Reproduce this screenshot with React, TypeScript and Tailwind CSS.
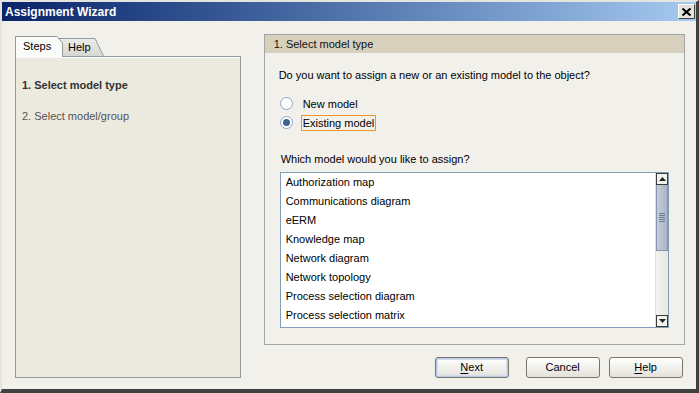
import { useState } from "react";

const models = [
  "Authorization map",
  "Communications diagram",
  "eERM",
  "Knowledge map",
  "Network diagram",
  "Network topology",
  "Process selection diagram",
  "Process selection matrix",
];

function Radio({ checked }: { checked: boolean }) {
  return (
    <span className="w-[13px] h-[13px] rounded-full border border-[#8ba6c6] bg-white flex items-center justify-center">
      {checked && <span className="w-[7px] h-[7px] rounded-full bg-[#3e6196]" />}
    </span>
  );
}

function Arrow({ up }: { up?: boolean }) {
  return (
    <div className="w-[12px] h-[12px] border border-[#3a3a3a] bg-[#f3f2ec] flex items-center justify-center">
      <svg width="7" height="4" viewBox="0 0 7 4">
        <path d={up ? "M0 4 L3.5 0 L7 4 Z" : "M0 0 L3.5 4 L7 0 Z"} fill="#222" />
      </svg>
    </div>
  );
}

function WinButton({ label, hot, isDefault }: { label: string; hot?: number; isDefault?: boolean }) {
  return (
    <button
      className={
        "w-[74px] h-[21px] rounded-[3px] border border-[#7a7668] bg-gradient-to-b from-white to-[#e4e2da] text-[11px] leading-none text-black flex items-center justify-center " +
        (isDefault ? "shadow-[inset_0_0_0_1px_#b6c9e6,inset_0_0_0_2px_#d2def0]" : "")
      }
    >
      {hot === undefined ? (
        label
      ) : (
        <span>
          <span className="underline underline-offset-2">{label[hot]}</span>
          {label.slice(hot + 1)}
        </span>
      )}
    </button>
  );
}

export default function App() {
  const [choice, setChoice] = useState<"new" | "existing">("existing");

  return (
    <div className="w-[699px] h-[393px] flex flex-col bg-[#f2f0eb] border-l-2 border-t-2 border-r-[3px] border-b-[4px] border-l-[#e6e4de] border-t-[#e6e4de] border-r-[#404040] border-b-[#404040] font-['Liberation_Sans',Arial,sans-serif] text-[11px] text-black overflow-hidden">
      {/* title bar */}
      <div className="h-[19px] shrink-0 flex items-center justify-between pl-[3px] pr-[1px] bg-gradient-to-r from-[#0a246a] to-[#a6caf0]">
        <span className="text-white font-bold text-[12px] leading-none">Assignment Wizard</span>
        <div className="w-[17px] h-[15px] bg-[#e4e2dc] border border-t-white border-l-white border-r-[#404040] border-b-[#404040] flex items-center justify-center">
          <svg width="9" height="8" viewBox="0 0 9 8">
            <path d="M0.5 0.5 L8.5 7.5 M8.5 0.5 L0.5 7.5" stroke="#000" strokeWidth="2" />
          </svg>
        </div>
      </div>

      {/* body */}
      <div className="flex-1 flex pl-[13px] pr-[11px] pt-[13px] gap-[23px]">
        {/* steps column */}
        <div className="w-[226px] mt-[2px] flex flex-col">
          <div className="relative h-[20px] shrink-0">
            <div className="absolute left-[43px] top-[2px] w-[46px] h-[18px]">
              <svg className="absolute inset-0" width="46" height="18" viewBox="0 0 46 18">
                <defs>
                  <linearGradient id="helpTab" x1="0" y1="0" x2="0" y2="1">
                    <stop offset="0" stopColor="#ececea" />
                    <stop offset="1" stopColor="#d6d6d2" />
                  </linearGradient>
                </defs>
                <path d="M0.5 18 V0.5 H37 L45.5 18" fill="url(#helpTab)" stroke="#919b9c" />
              </svg>
              <span className="absolute left-[10px] top-[3px] leading-[13px]">Help</span>
            </div>
            <div className="absolute left-0 top-0 w-[48px] h-[21px] z-10">
              <svg className="absolute inset-0" width="48" height="21" viewBox="0 0 48 21">
                <path d="M0.5 21 V0.5 H42 L47.5 7 V21" fill="#fbfbfa" stroke="#919b9c" />
                <rect x="1" y="20" width="46" height="1" fill="#fbfbfa" />
              </svg>
              <span className="absolute left-[8px] top-[4px] leading-[13px]">Steps</span>
            </div>
          </div>
          <div className="h-[322px] border border-[#919b9c] bg-[#ece9df] shadow-[inset_0_1px_0_#fbfbfa] flex flex-col pl-[6px] pt-[22px] gap-[18px] leading-[13px]">
            <span className="font-bold text-[#333]">1. Select model type</span>
            <span className="text-[#555]">2. Select model/group</span>
          </div>
        </div>

        {/* main column */}
        <div className="w-[422px] flex flex-col">
          <div className="h-[311px] border border-[#a5a5a5] flex flex-col">
            <div className="h-[18px] shrink-0 bg-[#d6d0bd] pl-[9px] flex items-center leading-none text-[#111]">
              1. Select model type
            </div>
            <div className="flex flex-col pl-[14px] pr-[15px]">
              <p className="mt-[16px] leading-[13px]">Do you want to assign a new or an existing model to the object?</p>
              <div className="mt-[12px] flex flex-col pl-[1px]">
                <label className="h-[19px] flex items-center gap-[8px]" onClick={() => setChoice("new")}>
                  <Radio checked={choice === "new"} />
                  <span className="px-[1px] border border-transparent leading-[14px]">New model</span>
                </label>
                <label className="h-[19px] flex items-center gap-[8px]" onClick={() => setChoice("existing")}>
                  <Radio checked={choice === "existing"} />
                  <span className="px-[1px] border border-[#f0972a] leading-[14px]">Existing model</span>
                </label>
              </div>
              <p className="mt-[21px] leading-[13px] pl-[2px]">Which model would you like to assign?</p>
              <div className="mt-[6px] ml-[1px] h-[156px] border border-[#7f9db9] bg-white flex">
                <ul className="flex-1 flex flex-col pl-[5px]">
                  {models.map((m) => (
                    <li key={m} className="h-[19px] flex items-center leading-none">
                      {m}
                    </li>
                  ))}
                </ul>
                <div className="w-[13px] flex flex-col bg-gradient-to-r from-[#f3f3ef] to-[#e8e8e2] border-l border-[#e0e0da]">
                  <Arrow up />
                  <div className="h-[66px] border-x border-b border-[#8796ad] bg-gradient-to-r from-[#c6cedb] to-[#a9b4c6] flex flex-col items-center justify-center gap-[1px]">
                    <span className="w-[6px] h-px bg-[#6d7c95]" />
                    <span className="w-[6px] h-px bg-[#6d7c95]" />
                    <span className="w-[6px] h-px bg-[#6d7c95]" />
                    <span className="w-[6px] h-px bg-[#6d7c95]" />
                    <span className="w-[6px] h-px bg-[#6d7c95]" />
                  </div>
                  <div className="flex-1" />
                  <Arrow />
                </div>
              </div>
            </div>
          </div>
          <div className="mt-[12px] flex pl-[171px]">
            <WinButton label="Next" hot={0} isDefault />
            <div className="ml-[17px]">
              <WinButton label="Cancel" />
            </div>
            <div className="ml-[9px]">
              <WinButton label="Help" hot={0} />
            </div>
          </div>
        </div>
      </div>
    </div>
  );
}
